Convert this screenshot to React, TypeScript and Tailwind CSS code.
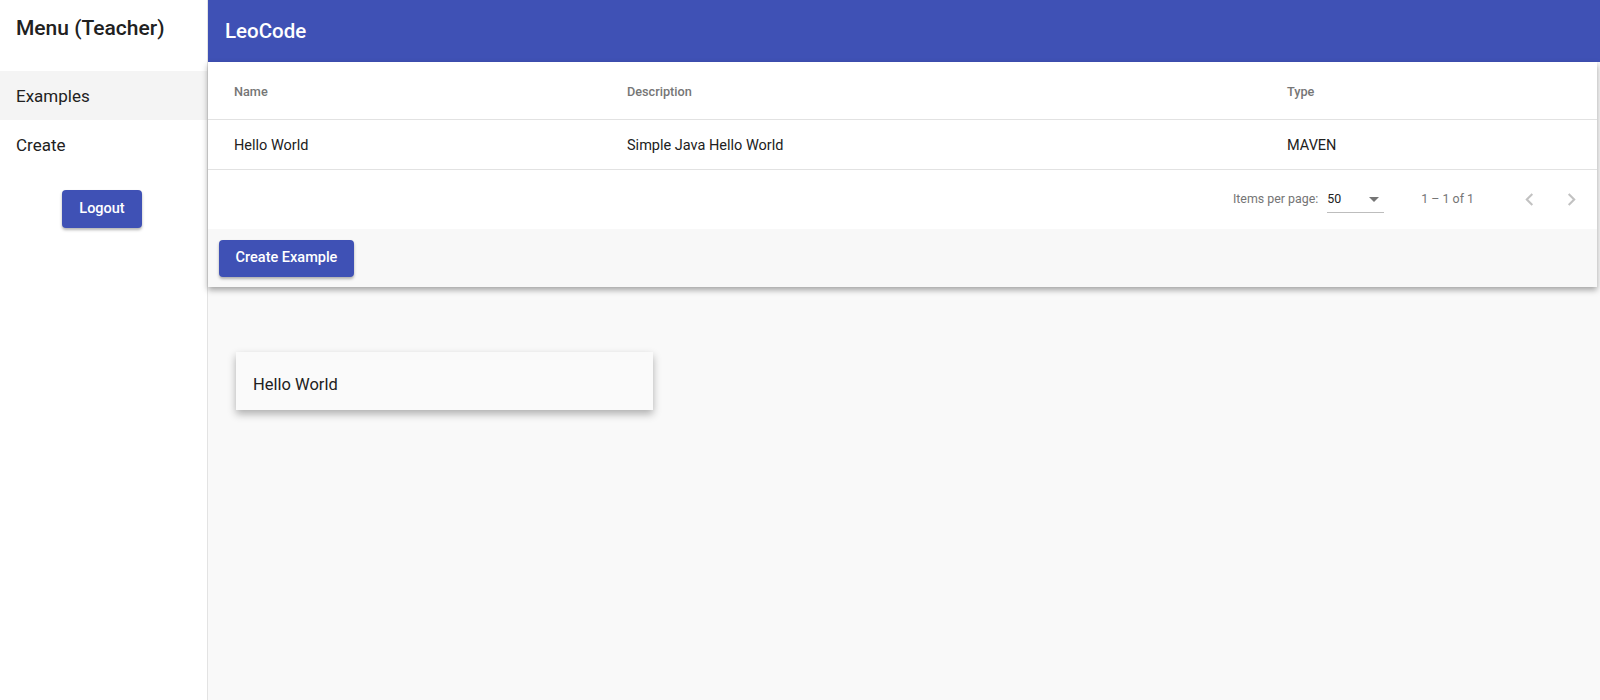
import React from "react";

const rows = [
  { name: "Hello World", description: "Simple Java Hello World", type: "MAVEN" },
];

function Chevron({ dir }: { dir: "left" | "right" }) {
  const d =
    dir === "left"
      ? "M15.41 7.41L14 6l-6 6 6 6 1.41-1.41L10.83 12z"
      : "M10 6L8.59 7.41 13.17 12l-4.58 4.59L10 18l6-6z";
  return (
    <button className="w-[40px] h-[40px] flex items-center justify-center text-[#c2c2c2]">
      <svg width="25" height="25" viewBox="0 0 24 24" fill="currentColor">
        <path d={d} />
      </svg>
    </button>
  );
}

export default function App() {
  return (
    <div className="flex h-screen w-full min-h-[700px] font-['Roboto',sans-serif] text-[#212121]">
      {/* sidebar */}
      <aside className="w-[208px] shrink-0 border-r border-[#e3e3e3] bg-white flex flex-col">
        <div className="h-[71px] flex items-center pb-[13px] pl-[16px] text-[21px] font-medium">
          Menu (Teacher)
        </div>
        <div className="h-[49px] flex items-center pl-[16px] pt-[2px] bg-[#f4f4f4] text-[17px]">
          Examples
        </div>
        <div className="h-[49px] flex items-center pl-[16px] pt-[2px] text-[17px]">Create</div>
        <button className="mt-[21px] ml-[62px] w-[80px] h-[38px] rounded-[4px] bg-[#3f51b5] text-white text-[14.5px] font-medium shadow-[0_2px_3px_rgba(0,0,0,0.3)]">
          Logout
        </button>
      </aside>

      {/* main */}
      <main className="flex-1 flex flex-col bg-[#f9f9f9]">
        <header className="h-[62px] shrink-0 bg-[#3f51b5] flex items-center pl-[17px] text-white text-[20.5px] font-medium">
          LeoCode
        </header>

        <section className="mr-[3px] bg-white shadow-[0_3px_6px_rgba(0,0,0,0.35)]">
          <div className="h-[58px] grid grid-cols-[393px_660px_1fr] items-center pl-[26px] pt-[2px] border-b border-[#e2e2e2] text-[12.7px] font-medium text-[#767676]">
            <div>Name</div>
            <div>Description</div>
            <div>Type</div>
          </div>
          {rows.map((r, i) => (
            <div
              key={i}
              className="h-[50px] grid grid-cols-[393px_660px_1fr] items-center pl-[26px] pt-[2px] border-b border-[#e2e2e2] text-[14.5px]"
            >
              <div>{r.name}</div>
              <div>{r.description}</div>
              <div>{r.type}</div>
            </div>
          ))}
          <div className="h-[59px] flex items-center justify-end pr-[6px] text-[12.4px] text-[#757575]">
            <span>Items per page:</span>
            <div className="ml-[9px] w-[57px] h-[26px] flex items-center justify-between border-b border-[#bdbdbd] text-[#212121]">
              <span>50</span>
              <svg width="10" height="5" viewBox="0 0 10 5" className="mr-[5px] text-[#757575]" fill="currentColor">
                <path d="M0 0l5 5 5-5z" />
              </svg>
            </div>
            <span className="ml-[37px] mr-[35px]">1 – 1 of 1</span>
            <Chevron dir="left" />
            <div className="w-[2px]" />
            <Chevron dir="right" />
          </div>
          <div className="h-[58px] flex items-center pl-[11px] bg-[#f8f8f8]">
            <button className="w-[135px] h-[37px] rounded-[4px] bg-[#3f51b5] text-white text-[14.5px] font-medium shadow-[0_2px_3px_rgba(0,0,0,0.3)]">
              Create Example
            </button>
          </div>
        </section>

        <div className="mt-[65px] ml-[28px] w-[417px] h-[58px] flex items-center pl-[17px] pt-[9px] bg-[#fafafa] text-[16.5px] shadow-[0_4px_8px_rgba(0,0,0,0.3)]">
          Hello World
        </div>
      </main>
    </div>
  );
}
